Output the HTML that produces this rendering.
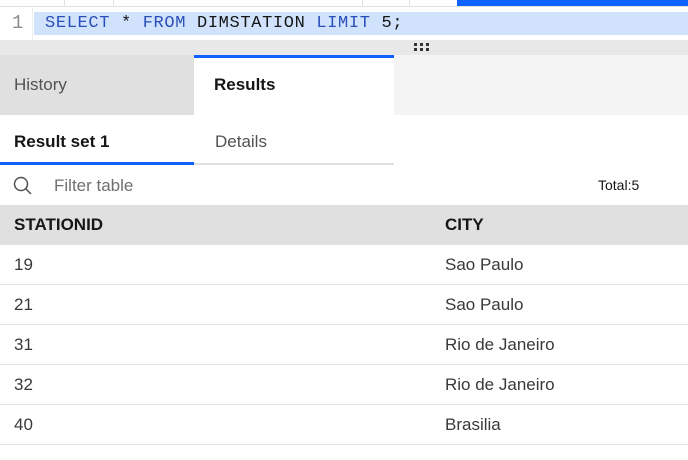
<html><head><style>
body{margin:0;width:688px;height:460px;overflow:hidden;background:#fff;font-family:"Liberation Sans",sans-serif;color:#161616;position:relative}
.a{position:absolute}
.row{position:absolute;left:0;width:688px;height:39px;border-bottom:1px solid #e0e0e0;font-size:17px;color:#393939}
.row span{position:absolute;top:10px}
.d{position:absolute;width:3px;height:3px;background:#333}
</style></head><body>
<div class="a" style="left:0;top:0;width:688px;height:6px;border-bottom:1px solid #e0e0e0"></div>
<div class="a" style="left:64px;top:0;width:1px;height:6px;background:#e0e0e0"></div>
<div class="a" style="left:113px;top:0;width:1px;height:6px;background:#e0e0e0"></div>
<div class="a" style="left:362px;top:0;width:1px;height:6px;background:#e0e0e0"></div>
<div class="a" style="left:409px;top:0;width:1px;height:6px;background:#e0e0e0"></div>
<div class="a" style="left:457px;top:0;width:231px;height:6px;background:#0f62fe"></div>
<div class="a" style="left:32px;top:8px;width:1px;height:32px;background:#eee"></div>
<div class="a" style="left:12px;top:12px;font:19px/23px 'Liberation Mono',monospace;color:#8d8d8d">1</div>
<div class="a" style="left:34px;top:12px;width:654px;height:23px;background:#d0e2fc"></div>
<div class="a" style="left:45px;top:12px;font:17px/23px 'Liberation Mono',monospace;letter-spacing:0.65px;color:#161616;white-space:pre"><span style="color:#2a4fb8">SELECT</span> * <span style="color:#2a4fb8">FROM</span> DIMSTATION <span style="color:#2a4fb8">LIMIT</span> 5;</div>
<div class="a" style="left:0;top:40px;width:688px;height:15px;background:#e8e8e8"></div>
<div class="d" style="left:414px;top:43px"></div><div class="d" style="left:420px;top:43px"></div><div class="d" style="left:426px;top:43px"></div>
<div class="d" style="left:414px;top:48px"></div><div class="d" style="left:420px;top:48px"></div><div class="d" style="left:426px;top:48px"></div>
<div class="a" style="left:0;top:55px;width:688px;height:60px;background:#f4f4f4"></div>
<div class="a" style="left:0;top:55px;width:194px;height:60px;background:#e0e0e0"></div>
<div class="a" style="left:14px;top:75px;font-size:17px;color:#525252">History</div>
<div class="a" style="left:194px;top:55px;width:200px;height:60px;background:#fff;border-top:3px solid #0f62fe;box-sizing:border-box"></div>
<div class="a" style="left:214px;top:75px;font-size:17px;font-weight:bold">Results</div>
<div class="a" style="left:14px;top:132px;font-size:17px;font-weight:bold">Result set 1</div>
<div class="a" style="left:215px;top:132px;font-size:17px;color:#525252">Details</div>
<div class="a" style="left:0;top:162px;width:194px;height:3px;background:#0f62fe"></div>
<div class="a" style="left:194px;top:163px;width:200px;height:2px;background:#e0e0e0"></div>
<svg class="a" style="left:12px;top:175px" width="22" height="22" viewBox="0 0 22 22"><circle cx="9" cy="9" r="6.5" fill="none" stroke="#525252" stroke-width="1.5"/><line x1="13.7" y1="13.7" x2="19" y2="19" stroke="#525252" stroke-width="1.5"/></svg>
<div class="a" style="left:54px;top:176px;font-size:17px;color:#6f6f6f">Filter table</div>
<div class="a" style="left:598px;top:177px;font-size:14px;color:#161616">Total:5</div>
<div class="a" style="left:0;top:205px;width:688px;height:40px;background:#e0e0e0"></div>
<div class="a" style="left:14px;top:215px;font-size:17px;font-weight:bold">STATIONID</div>
<div class="a" style="left:445px;top:215px;font-size:17px;font-weight:bold">CITY</div>
<div class="row" style="top:245px"><span style="left:14px">19</span><span style="left:445px">Sao Paulo</span></div>
<div class="row" style="top:285px"><span style="left:14px">21</span><span style="left:445px">Sao Paulo</span></div>
<div class="row" style="top:325px"><span style="left:14px">31</span><span style="left:445px">Rio de Janeiro</span></div>
<div class="row" style="top:365px"><span style="left:14px">32</span><span style="left:445px">Rio de Janeiro</span></div>
<div class="row" style="top:405px"><span style="left:14px">40</span><span style="left:445px">Brasilia</span></div>
</body></html>
